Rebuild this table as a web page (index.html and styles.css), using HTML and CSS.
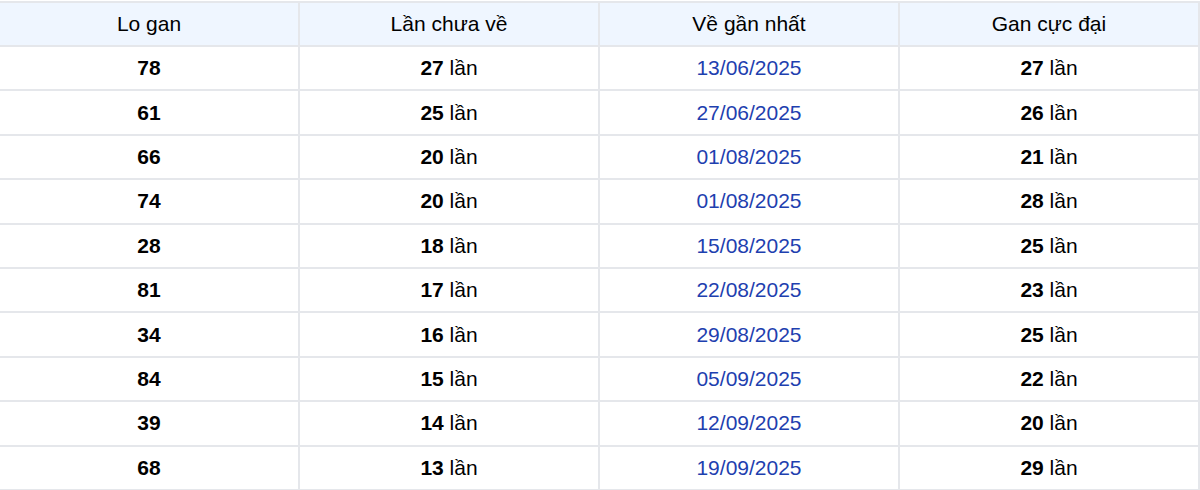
FILE: index.html
```html
<!DOCTYPE html>
<html lang="vi">
<head>
<meta charset="utf-8">
<link rel="stylesheet" href="styles.css">
</head>
<body>
<table class="gan-table">
  <thead>
    <tr><th>Lo gan</th><th>Lần chưa về</th><th>Về gần nhất</th><th>Gan cực đại</th></tr>
  </thead>
  <tbody>
    <tr><td><b>78</b></td><td><b>27</b> lần</td><td class="date">13/06/2025</td><td><b>27</b> lần</td></tr>
    <tr><td><b>61</b></td><td><b>25</b> lần</td><td class="date">27/06/2025</td><td><b>26</b> lần</td></tr>
    <tr><td><b>66</b></td><td><b>20</b> lần</td><td class="date">01/08/2025</td><td><b>21</b> lần</td></tr>
    <tr><td><b>74</b></td><td><b>20</b> lần</td><td class="date">01/08/2025</td><td><b>28</b> lần</td></tr>
    <tr><td><b>28</b></td><td><b>18</b> lần</td><td class="date">15/08/2025</td><td><b>25</b> lần</td></tr>
    <tr><td><b>81</b></td><td><b>17</b> lần</td><td class="date">22/08/2025</td><td><b>23</b> lần</td></tr>
    <tr><td><b>34</b></td><td><b>16</b> lần</td><td class="date">29/08/2025</td><td><b>25</b> lần</td></tr>
    <tr><td><b>84</b></td><td><b>15</b> lần</td><td class="date">05/09/2025</td><td><b>22</b> lần</td></tr>
    <tr><td><b>39</b></td><td><b>14</b> lần</td><td class="date">12/09/2025</td><td><b>20</b> lần</td></tr>
    <tr><td><b>68</b></td><td><b>13</b> lần</td><td class="date">19/09/2025</td><td><b>29</b> lần</td></tr>
  </tbody>
</table>
</body>
</html>
```
FILE: styles.css
```css
html, body {
  margin: 0;
  padding: 0;
  background: #fff;
}
body {
  padding-top: 1px;
  margin-left: -2px;
  font-family: "Liberation Sans", Arial, sans-serif;
  font-size: 21px;
  color: #000;
}
.gan-table {
  width: 1202px;
  border-collapse: collapse;
  table-layout: fixed;
}
.gan-table th,
.gan-table td {
  border: 2px solid #e5e7eb;
  text-align: center;
  height: 42.4px;
  padding: 0;
  font-weight: normal;
}
.gan-table th {
  height: 42px;
  background: #eff6ff;
}
.gan-table b {
  font-weight: bold;
}
.gan-table .date {
  color: #1e40af;
}
```
